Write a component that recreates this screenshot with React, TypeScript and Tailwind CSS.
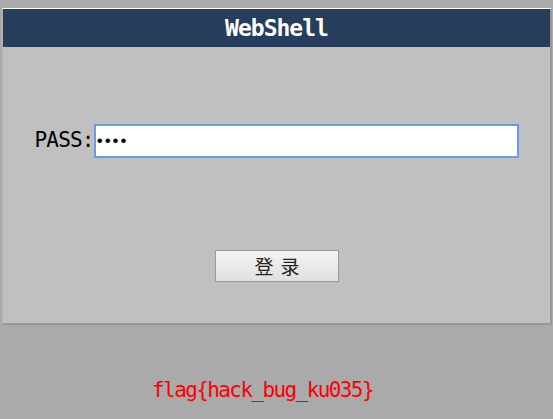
import React from "react"

const mono = "font-['DejaVu_Sans_Mono','Liberation_Mono',monospace]"

const App = () => {
	return (
		<div className="min-h-screen w-full bg-[#aaaaaa] pt-2">
			<div className="ml-[2px] mr-[1px] border-t border-l border-t-white border-l-[#b4b4b4] border-r-[2px] border-b-[2px] border-r-[#999999] border-b-[#999999] bg-[#c0c0c0]">
				<div className="flex h-[38px] items-center justify-center bg-[#273d5e]">
					<span className={`${mono} text-[23px] font-bold tracking-[-1px] text-white`}>
						WebShell
					</span>
				</div>

				<div className="flex flex-col items-center pt-[77px] pb-[41px]">
					<div className="flex w-[484px] items-center">
						<label className={`${mono} text-[21px] tracking-[-0.8px] text-black`}>
							PASS:
						</label>
						<input
							type="password"
							defaultValue="1234"
							readOnly
							className="h-[34px] flex-1 border-2 border-[#6a9ae8] bg-white pl-[1px] font-['Liberation_Sans',sans-serif] text-[17px] tracking-[2px] text-black outline-none"
						/>
					</div>

					<button className="mt-[92px] h-[32px] w-[124px] border border-[#9a9a9a] bg-gradient-to-b from-[#f4f4f4] to-[#e0e0e0] pl-[8px] font-['Noto_Sans_CJK_SC',sans-serif] text-[19px] tracking-[7px] text-[#222]">
						登录
					</button>
				</div>
			</div>

			<div className="flex justify-center pt-[50px] pr-[28px]">
				<p className={`${mono} text-[21px] tracking-[-1.6px] text-[#ff0000]`}>
					flag{"{"}hack_bug_ku035{"}"}
				</p>
			</div>
		</div>
	)
}
export default App
